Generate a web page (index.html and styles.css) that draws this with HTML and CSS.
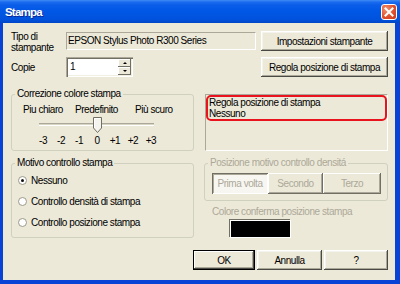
FILE: index.html
```html
<!DOCTYPE html>
<html lang="it">
<head>
    <meta charset="UTF-8">
    <title>Stampa</title>
    <link rel="stylesheet" href="styles.css">
</head>
<body>
<div class="window">
    <div class="titlebar">
        <span class="title">Stampa</span>
        <span class="close">
            <svg width="14" height="14" viewBox="0 0 14 14"><path d="M3.5 3.5 L10.5 10.5 M10.5 3.5 L3.5 10.5" stroke="#fff" stroke-width="2" stroke-linecap="square"/></svg>
        </span>
    </div>
    <div class="content">
        <div class="row">
            <div class="label two">Tipo di<br>stampante</div>
            <div class="field">EPSON Stylus Photo R300 Series</div>
            <button class="btn wide">Impostazioni stampante</button>
        </div>
        <div class="row second">
            <div class="label">Copie</div>
            <div class="spin">
                <span class="spin-value">1</span>
                <span class="spin-arrows">
                    <span class="arrow up"></span>
                    <span class="arrow down"></span>
                </span>
            </div>
            <button class="btn wide push">Regola posizione di stampa</button>
        </div>

        <div class="panels">
            <fieldset class="group color">
                <legend>Correzione colore stampa</legend>
                <div class="scale-labels">
                    <span class="s1">Piu chiaro</span>
                    <span class="s2">Predefinito</span>
                    <span>Più scuro</span>
                </div>
                <div class="slider">
                    <div class="track"></div>
                    <svg class="thumb" width="9" height="16" viewBox="0 0 9 16">
                        <path d="M0.5 0.5 H8.5 V11 L4.5 15.5 L0.5 11 Z" fill="#f4f3ee" stroke="#716f64"/>
                        <path d="M1.5 11 V1.5 H7.5" fill="none" stroke="#fff"/>
                    </svg>
                </div>
                <div class="ticks">
                    <span>-3</span><span>-2</span><span>-1</span><span>0</span><span>+1</span><span>+2</span><span>+3</span>
                </div>
            </fieldset>

            <div class="info">
                <div class="highlight">Regola posizione di stampa<br>Nessuno</div>
            </div>

            <fieldset class="group motivo">
                <legend>Motivo controllo stampa</legend>
                <div class="radio"><span class="dot checked"></span>Nessuno</div>
                <div class="radio"><span class="dot"></span>Controllo densità di stampa</div>
                <div class="radio"><span class="dot"></span>Controllo posizione stampa</div>
            </fieldset>

            <div class="right-col">
                <fieldset class="group disabled">
                    <legend>Posizione motivo controllo densitá</legend>
                    <div class="seg">
                        <span class="seg-btn first pressed">Prima volta</span>
                        <span class="seg-btn mid">Secondo</span>
                        <span class="seg-btn last">Terzo</span>
                    </div>
                </fieldset>
                <div class="swatch-label">Colore conferma posizione stampa</div>
                <div class="swatch"></div>
            </div>
        </div>

        <div class="actions">
            <button class="btn default ok">OK</button>
            <button class="btn cancel">Annulla</button>
            <button class="btn help">?</button>
        </div>
    </div>
</div>
</body>
</html>
```

FILE: styles.css
```css
* { box-sizing: border-box; }
body { margin: 0; background: #fff; }

.window { width: 400px; height: 284px; display: flex; flex-direction: column; background: #0843d6; font: 10px "Liberation Sans", Arial, sans-serif; letter-spacing: -0.45px; color: #000; }

.titlebar { height: 23px; flex: none; display: flex; align-items: center; padding: 0 3px 0 5px; background: linear-gradient(#3f8cf5 0, #1c6cee 2px, #0a5de8 5px, #0057e5 50%, #0052dc 85%, #0046c6 100%); }
.title { flex: 1; color: #fff; font-weight: bold; font-size: 11.5px; letter-spacing: -0.8px; text-shadow: 1px 1px #0a2a9a; }
.close { width: 16px; height: 16px; border: 1px solid #fff; border-radius: 3px; display: flex; align-items: center; justify-content: center; background: radial-gradient(circle at 30% 30%, #f0916f, #e0502c 55%, #c8381a); }

.content { flex: 1; margin: 0 5px 4px 3px; background: #ece9d8; padding: 8px 7px 0 8px; }

.row { display: flex; align-items: center; height: 20px; }
.row.second { margin-top: 6px; }
.label { width: 55px; flex: none; }
.label.two { align-self: flex-start; line-height: 11px; }

.field { width: 190px; height: 18px; flex: none; border: 1px solid; border-color: #aca899 #fff #fff #aca899; padding-left: 1px; line-height: 16px; white-space: nowrap; overflow: hidden; }

.btn { height: 20px; padding: 0; border: 0; font: inherit; letter-spacing: inherit; color: #000; background: #ece9d8; box-shadow: inset -1px -1px #4a4a44, inset 1px 1px #fff, inset -2px -2px #aca899, inset 2px 2px #f4f3ee; }
.btn.wide { width: 127px; margin-left: 5px; flex: none; }
.btn.push { margin-left: auto; }

.spin { width: 67px; height: 20px; display: flex; background: #fff; padding: 2px; box-shadow: inset 1px 1px #aca899, inset 2px 2px #716f64, inset -1px -1px #fff, inset -2px -2px #f1efe2; }
.spin-value { flex: 1; padding-left: 2px; line-height: 16px; }
.spin-arrows { width: 13px; display: flex; flex-direction: column; }
.arrow { flex: 1; display: flex; align-items: center; justify-content: center; background: #ece9d8; box-shadow: inset -1px -1px #716f64, inset 1px 1px #fff; }
.arrow::before { content: ""; border-left: 2px solid transparent; border-right: 2px solid transparent; }
.arrow.up::before { border-bottom: 2px solid #000; }
.arrow.down::before { border-top: 2px solid #000; }

.panels { display: grid; grid-template-columns: 183px 184px; column-gap: 10px; row-gap: 5px; margin-top: 10px; }

.group { margin: 0; padding: 0; min-width: 0; border: 1px solid #d0d0bf; border-radius: 3px; }
.group legend { margin-left: 3px; padding: 0 2px; line-height: 14px; }

.scale-labels { display: flex; margin-top: 2px; padding-left: 11px; line-height: 13px; }
.scale-labels .s1 { width: 52px; }
.scale-labels .s2 { width: 60px; }

.slider { position: relative; width: 115px; height: 16px; margin: 1px 0 0 27px; padding-top: 6px; }
.track { height: 3px; border-top: 1px solid #aca899; border-bottom: 1px solid #fff; background: #d8d5c4; }
.thumb { position: absolute; left: 54px; top: 0; }

.ticks { display: flex; margin: 1px 0 3px 22px; line-height: 13px; }
.ticks span { width: 18px; text-align: center; }

.info { margin: 7px 0 0 1px; height: 57px; border: 1px solid; border-color: #aca899 #fff #fff #aca899; }
.highlight { height: 26px; border: 2px solid #e8131c; border-radius: 5px; padding-left: 1px; line-height: 11px; }

.motivo { padding-bottom: 4px; }
.radio { display: flex; align-items: center; height: 21px; padding-left: 6px; }
.dot { width: 9px; height: 9px; margin-right: 4px; border-radius: 50%; background: #fff; border: 1px solid #9c9a8c; display: flex; align-items: center; justify-content: center; }
.dot.checked::after { content: ""; width: 3px; height: 3px; border-radius: 50%; background: #111; }

.disabled { color: #aca899; padding: 3px 0 6px 0; }
.seg { display: flex; height: 21px; margin-left: 7px; }
.seg-btn { display: flex; align-items: center; justify-content: center; color: #aca899; background: #ece9d8; box-shadow: inset -1px -1px #716f64, inset 1px 1px #fff, inset -2px -2px #aca899; }
.seg-btn.first { width: 56px; }
.seg-btn.mid { width: 55px; }
.seg-btn.last { width: 58px; }
.seg-btn.pressed { background: #f7f6f1; box-shadow: inset 1px 1px #716f64, inset -1px -1px #fff, inset 2px 2px #aca899; }

.swatch-label { margin-top: 4px; padding-left: 8px; line-height: 13px; color: #aca899; }
.swatch { width: 61px; height: 18px; margin: 2px 0 0 26px; background: #000; border: 1px solid #fff; box-shadow: -1px -1px 0 #716f64; }

.actions { display: flex; justify-content: flex-end; margin-top: 12px; }
.actions .ok { width: 62px; }
.actions .cancel { width: 65px; margin-left: 2px; }
.actions .help { width: 64px; margin-left: 2px; }
.btn.default { box-shadow: inset 0 0 0 1px #000, inset -2px -2px #4a4a44, inset 2px 2px #fff, inset -3px -3px #aca899; }
```
